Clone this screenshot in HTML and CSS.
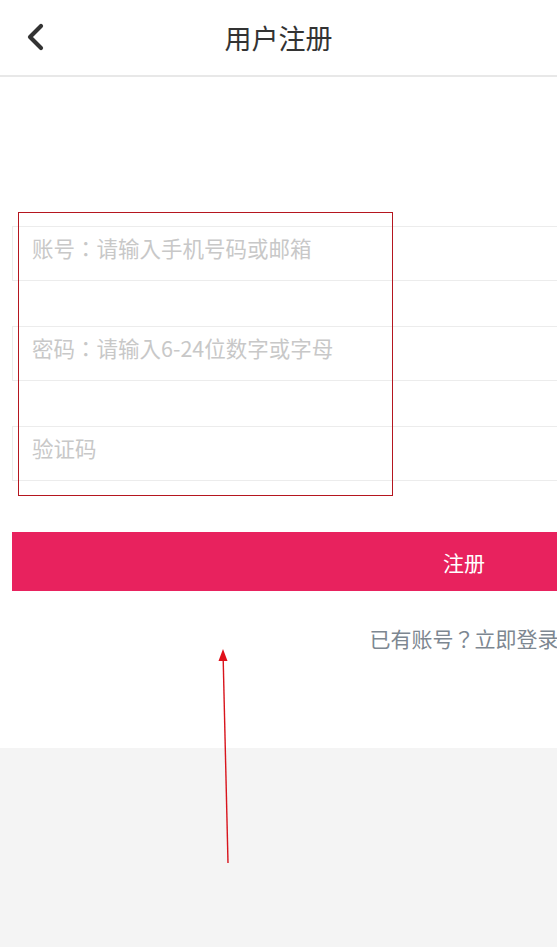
FILE: index.html
```html
<!DOCTYPE html>
<html lang="zh-CN">
<head>
<meta charset="utf-8">
<title>用户注册</title>
<link rel="stylesheet" href="styles.css">
</head>
<body>
<div class="page">
  <header class="header">
    <span class="back">
      <svg width="22" height="30" viewBox="0 0 22 30"><path d="M17 4 L6 15 L17 26" fill="none" stroke="#333" stroke-width="4.2" stroke-linecap="round" stroke-linejoin="round"/></svg>
    </span>
    <h1 class="title">用户注册</h1>
  </header>
  <main class="form">
    <div class="field"><input class="input" lang="zh-TW" type="text" placeholder="账号：请输入手机号码或邮箱"></div>
    <div class="field"><input class="input" lang="zh-TW" type="password" placeholder="密码：请输入6-24位数字或字母"></div>
    <div class="field"><input class="input" lang="zh-TW" type="text" placeholder="验证码"></div>
    <button class="submit">注册</button>
    <p class="login">已有账号<span class="punct" lang="zh-TW">？</span>立即登录</p>
  </main>
</div>
<div class="note-box"></div>
<svg class="note-arrow" width="20" height="220" viewBox="0 0 20 220"><path d="M12 215 L7.2 12" stroke="#d8141c" stroke-width="1.4" fill="none"/><path d="M7 1 L2.5 13 L11.5 13 Z" fill="#e0101a"/></svg>
</body>
</html>
```
FILE: styles.css
```css
html, body {
  margin: 0;
  padding: 0;
  overflow: hidden;
  width: 557px;
  height: 947px;
  background: #f4f4f4;
  font-family: "Noto Sans CJK SC", "Noto Sans", sans-serif;
}
.page {
  background: #fff;
  height: 748px;
  width: 557px;
  position: relative;
}
.header {
  height: 75px;
  border-bottom: 2px solid #e8e8e8;
  display: flex;
  align-items: center;
  justify-content: center;
  position: relative;
}
.back {
  position: absolute;
  left: 24px;
  top: 22px;
  display: block;
  width: 22px;
  height: 30px;
}
.back svg { display: block; }
.title {
  margin: 0;
  font-size: 27px;
  font-weight: normal;
  color: #333;
  line-height: 1;
}
.form {
  width: 904px;
  margin-left: 12px;
  padding-top: 149px;
}
.field {
  height: 53px;
  border: 1px solid #ececec;
  margin-bottom: 45px;
  display: flex;
  align-items: center;
}
.input {
  border: none;
  outline: none;
  background: transparent;
  height: 100%;
  width: 100%;
  padding: 0 0 12px 19px;
  margin: 0;
  box-sizing: border-box;
  font-family: "Noto Sans CJK TC", "Noto Sans CJK SC", sans-serif;
  font-size: 21.5px;
  color: #333;
}
.input::placeholder {
  color: #c8c8c8;
  font-family: "Noto Sans CJK TC", "Noto Sans CJK SC", sans-serif;
}
.submit {
  display: block;
  width: 904px;
  height: 59px;
  margin: 51px 0 0 0;
  border: none;
  background: #e8225e;
  color: #fff;
  font-family: inherit;
  font-size: 21px;
  padding: 0;
}
.login {
  margin: 32px 0 0 0;
  text-align: center;
  font-size: 21px;
  line-height: 30px;
  color: #7d8791;
}
.punct {
  font-family: "Noto Sans CJK TC", sans-serif;
}
.note-box {
  position: absolute;
  left: 18px;
  top: 212px;
  width: 373px;
  height: 282px;
  border: 1px solid #b5161f;
}
.note-arrow {
  position: absolute;
  left: 216px;
  top: 648px;
}
```
